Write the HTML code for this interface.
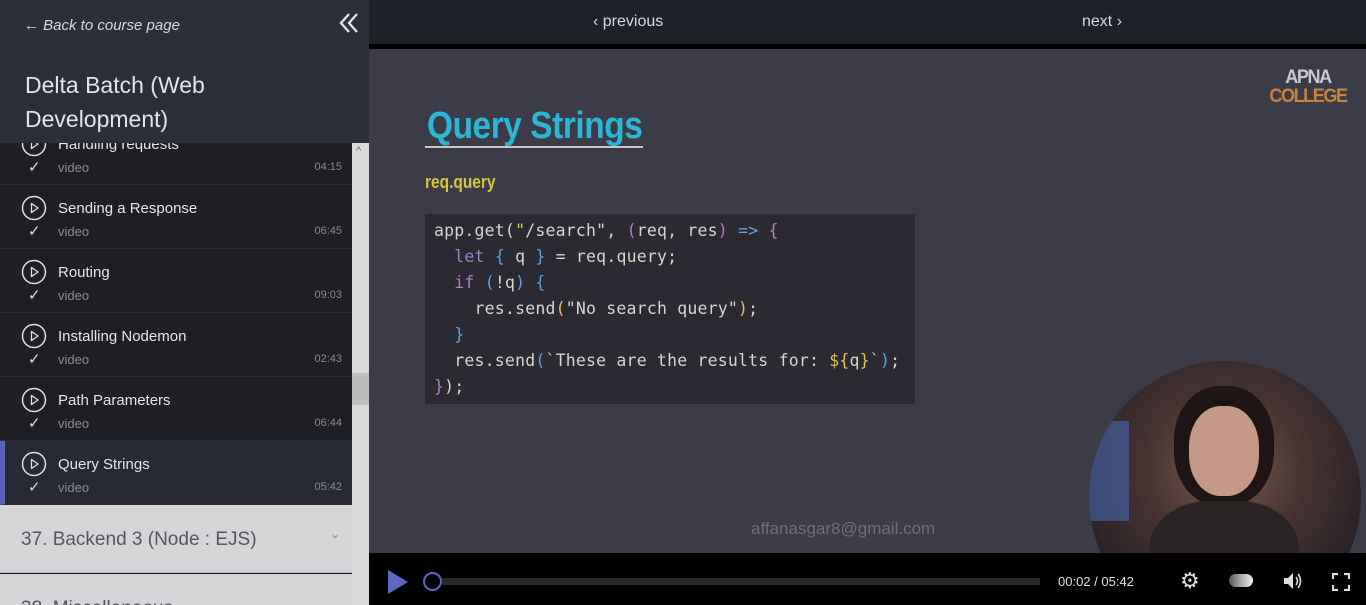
<!DOCTYPE html>
<html><head><meta charset="utf-8"><style>
*{margin:0;padding:0;box-sizing:border-box}
body{width:1366px;height:605px;overflow:hidden;background:#000;font-family:"Liberation Sans",sans-serif;position:relative}
.sb{position:absolute;left:0;top:0;width:369px;height:605px;background:#1d1f24;overflow:hidden}
.hdr{position:absolute;left:0;top:0;width:369px;height:143px;background:#2b2f3a;z-index:2}
.back{position:absolute;left:24px;top:17px;color:#d8d9dc;font-size:15px;font-style:italic}
.title{position:absolute;left:25px;top:68px;color:#e4e5e8;font-size:23px;line-height:34px}
.item{position:absolute;left:0;width:352px;height:64px;border-bottom:1px solid #2c2e34}
.item svg.ic{position:absolute;left:21px;top:10px}
.item .ck{position:absolute;left:28px;top:37px;color:#ddd;font-size:15px}
.item .nm{position:absolute;left:58px;top:15px;color:#e6e6e6;font-size:15px}
.item .vd{position:absolute;left:58px;top:39px;color:#8a8b90;font-size:13px}
.item .tm{position:absolute;right:10px;top:40px;color:#8a8b90;font-size:11px}
.sec{position:absolute;left:0;width:352px;height:68px;background:#d5d5d8;border-bottom:1px solid #b8b8bc;color:#55565c;font-size:19px;padding:24px 0 0 21px}
.scr{position:absolute;left:352px;top:143px;width:17px;height:462px;background:#d9d9db}
.top{position:absolute;left:369px;top:0;width:997px;height:44px;background:#1f2128;color:#d8d9dc;font-size:16px}
.vid{position:absolute;left:369px;top:49px;width:997px;height:504px;background:#3b3c47;overflow:hidden}
.ctl{position:absolute;left:369px;top:553px;width:997px;height:52px;background:#000}
.code{position:absolute;left:56px;top:165px;width:490px;height:190px;background:#2b2931;font-family:"DejaVu Sans Mono","Liberation Mono",monospace;font-size:16.5px;line-height:26px;color:#d9d4cf;padding:4px 9px;white-space:pre;letter-spacing:0.2px}
</style></head><body>
<svg width="0" height="0" style="position:absolute"><defs><g id="pi"><circle cx="13" cy="13" r="11.5" stroke="#e0e0e0" stroke-width="1.5" fill="none"/><path d="M10.5 8.5 L17 13 L10.5 17.5Z" stroke="#e0e0e0" stroke-width="1.3" fill="none" stroke-linejoin="round"/></g></defs></svg>
<div class="sb">
 <div class="hdr">
  <div class="back">&larr; Back to course page</div>
  <svg style="position:absolute;left:338px;top:12px" width="22" height="22" viewBox="0 0 22 22"><path d="M11 2 L3 11 L11 20 M19 2 L11 11 L19 20" stroke="#e0e0e0" stroke-width="2.4" fill="none"/></svg>
  <div class="title">Delta Batch (Web<br>Development)</div>
 </div>
 <div class="item" style="top:121px"><svg class="ic" width="26" height="26"><use href="#pi"/></svg><div class="nm">Handling requests</div><div class="ck">✓</div><div class="vd">video</div><div class="tm">04:15</div></div>
 <div class="item" style="top:185px"><svg class="ic" width="26" height="26"><use href="#pi"/></svg><div class="nm">Sending a Response</div><div class="ck">✓</div><div class="vd">video</div><div class="tm">06:45</div></div>
 <div class="item" style="top:249px"><svg class="ic" width="26" height="26"><use href="#pi"/></svg><div class="nm">Routing</div><div class="ck">✓</div><div class="vd">video</div><div class="tm">09:03</div></div>
 <div class="item" style="top:313px"><svg class="ic" width="26" height="26"><use href="#pi"/></svg><div class="nm">Installing Nodemon</div><div class="ck">✓</div><div class="vd">video</div><div class="tm">02:43</div></div>
 <div class="item" style="top:377px"><svg class="ic" width="26" height="26"><use href="#pi"/></svg><div class="nm">Path Parameters</div><div class="ck">✓</div><div class="vd">video</div><div class="tm">06:44</div></div>
 <div class="item" style="top:441px;background:#272a34;border-left:5px solid #5a62b8"><svg class="ic" width="26" height="26" style="left:16px"><use href="#pi"/></svg><div class="nm" style="left:53px">Query Strings</div><div class="ck" style="left:23px">✓</div><div class="vd" style="left:53px">video</div><div class="tm">05:42</div></div>
 <div class="sec" style="top:505px">37. Backend 3 (Node : EJS)<span style="position:absolute;right:12px;top:22px;font-size:12px;color:#888">&#8964;</span></div>
 <div class="sec" style="top:574px">38. Miscellaneous</div>
 <div class="scr"><div style="position:absolute;left:0;top:230px;width:17px;height:32px;background:#bdbdc0"></div><div style="position:absolute;left:4px;top:2px;color:#666;font-size:11px">^</div></div>
</div>
<div class="top"><span style="position:absolute;left:224px;top:13px">&lsaquo; previous</span><span style="position:absolute;left:713px;top:13px">next &rsaquo;</span></div>
<div class="vid">
 <div style="position:absolute;left:58px;top:56px;color:#2bb6d6;font-size:38px;font-weight:bold;transform:scaleX(0.88);transform-origin:0 0;letter-spacing:-0.5px">Query Strings</div>
 <div style="position:absolute;left:56px;top:97px;width:218px;height:2px;background:#c8c8cc"></div>
 <div style="position:absolute;left:56px;top:123px;color:#d8c43a;font-size:18px;font-weight:bold;transform:scaleX(0.86);transform-origin:0 0">req.query</div>
 <div class="code">app.get(<span style="color:#e0c25a">"</span>/search", <span style="color:#b07cc6">(</span>req, res<span style="color:#b07cc6">)</span> <span style="color:#6fa0e0">=&gt;</span> <span style="color:#b07cc6">{</span>
  <span style="color:#8a8ac8">let</span> <span style="color:#5aa0e0">{</span> q <span style="color:#5aa0e0">}</span> = req.query;
  <span style="color:#b07cc6">if</span> <span style="color:#5aa0e0">(</span>!q<span style="color:#5aa0e0">)</span> <span style="color:#5aa0e0">{</span>
    res.send<span style="color:#e0c25a">(</span>"No search query"<span style="color:#e0c25a">)</span>;
  <span style="color:#5aa0e0">}</span>
  res.send<span style="color:#5aa0e0">(</span>`These are the results for: <span style="color:#e0c25a">${</span>q<span style="color:#e0c25a">}</span>`<span style="color:#5aa0e0">)</span>;
<span style="color:#b07cc6">}</span>);</div>
 <div style="position:absolute;left:897px;top:19px;width:84px;text-align:center;font-weight:bold;font-size:19px;line-height:19px;letter-spacing:-1.5px;transform:scaleX(0.95)"><span style="color:#c9c9d2">APNA</span><br><span style="color:#c8843c">COLLEGE</span></div>
 <div style="position:absolute;left:382px;top:470px;color:#6d6e7a;font-size:17px">affanasgar8@gmail.com</div>
 <div style="position:absolute;left:720px;top:312px;width:272px;height:272px;border-radius:50%;background:radial-gradient(circle at 50% 40%,#7a5a50 0%,#4a3532 35%,#2a2228 70%,#3a3040 100%);overflow:hidden">
  <div style="position:absolute;left:85px;top:25px;width:100px;height:120px;border-radius:45%;background:#1e1514"></div>
  <div style="position:absolute;left:100px;top:45px;width:70px;height:90px;border-radius:45%;background:#c49a86"></div>
  <div style="position:absolute;left:60px;top:140px;width:150px;height:120px;border-radius:40%;background:#2a2424"></div>
  <div style="position:absolute;left:0;top:60px;width:40px;height:100px;background:#4468b0;opacity:.6"></div>
 </div>
</div>
<div class="ctl">
 <svg style="position:absolute;left:17px;top:16px" width="24" height="26"><path d="M2 1 L22 13 L2 25Z" fill="#5c67c4"/></svg>
 <div style="position:absolute;left:54px;top:19px;width:19px;height:19px;border:2px solid #5c67c4;border-radius:50%"></div>
 <div style="position:absolute;left:73px;top:25px;width:598px;height:7px;background:#2a2a2a"></div>
 <div style="position:absolute;left:689px;top:21px;color:#e0e0e0;font-size:13px">00:02 / 05:42</div>
 <div style="position:absolute;left:811px;top:15px;color:#ddd;font-size:22px">⚙</div>
 <div style="position:absolute;left:860px;top:21px;width:24px;height:13px;border-radius:7px;background:linear-gradient(90deg,#555,#aaa,#eee)"></div>
 <svg style="position:absolute;left:913px;top:18px" width="22" height="20"><path d="M2 7 H6 L11 2 V18 L6 13 H2Z" fill="#ddd"/><path d="M14 6 Q17 10 14 14 M16 3 Q21 10 16 17" stroke="#ddd" stroke-width="1.6" fill="none"/></svg>
 <svg style="position:absolute;left:963px;top:20px" width="18" height="18"><path d="M1 6 V1 H6 M12 1 H17 V6 M17 12 V17 H12 M6 17 H1 V12" stroke="#ddd" stroke-width="2.2" fill="none"/></svg>
</div>
</body></html>
